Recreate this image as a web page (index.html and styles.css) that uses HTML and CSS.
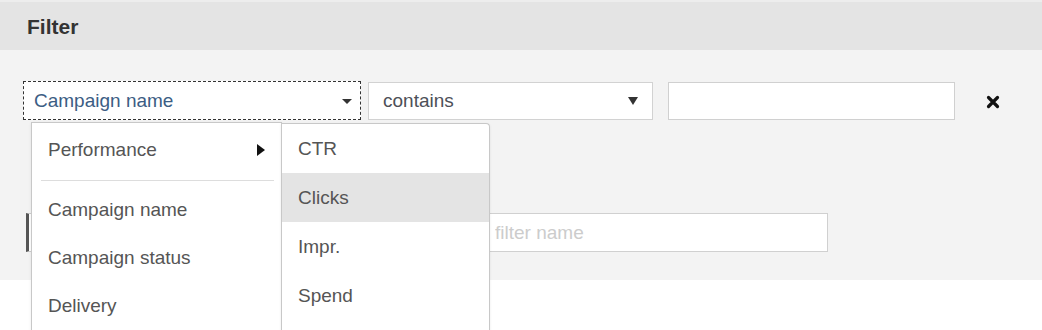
FILE: index.html
```html
<!DOCTYPE html>
<html lang="en">
<head>
  <meta charset="UTF-8" />
  <title>Filter</title>
  <link rel="stylesheet" href="styles.css">
</head>
<body>
  <div class="panel-head">Filter</div>
  <div class="panel-body">
    <div class="filter-row">
      <div class="field-wrap">
        <div class="select select-focus">
          <span class="select-value">Campaign name</span>
          <span class="caret small"></span>
        </div>

        <!-- field picker menu -->
        <div class="menu">
          <ul class="menu-list">
            <li class="menu-item has-sub">Performance <span class="sub-arrow"></span></li>
            <li class="menu-sep"></li>
            <li class="menu-item">Campaign name</li>
            <li class="menu-item">Campaign status</li>
            <li class="menu-item">Delivery</li>
          </ul>
          <ul class="menu-list submenu">
            <li class="menu-item">CTR</li>
            <li class="menu-item active">Clicks</li>
            <li class="menu-item">Impr.</li>
            <li class="menu-item">Spend</li>
          </ul>
        </div>
      </div>

      <div class="select select-op">
        <span class="select-value">contains</span>
        <span class="caret"></span>
      </div>
      <input class="text-input value-input" type="text" />
      <button class="remove" title="Remove">
        <svg width="14" height="14" viewBox="0 0 14 14"><path d="M2.5 2.5 L11.5 11.5 M11.5 2.5 L2.5 11.5" stroke="#111" stroke-width="3.2" stroke-linecap="round"/></svg>
      </button>
    </div>

    <div class="save-row">
      <button class="save-btn">Save filter</button>
      <input class="text-input name-input" type="text" placeholder="filter name" />
    </div>
  </div>
</body>
</html>
```

FILE: styles.css
```css
* {
  box-sizing: border-box;
  margin: 0;
  padding: 0;
}

body {
  font-family: 'Liberation Sans', Arial, sans-serif;
  font-size: 19px;
  color: #555;
  background: #fff;
  height: 330px;
  overflow: hidden;
}

.panel-head {
  height: 50px;
  background: #e4e4e4;
  border-top: 2px solid #ededed;
  padding: 13px 0 0 27px;
  font-weight: bold;
  font-size: 21px;
  color: #333;
}

.panel-body {
  background: #f3f3f3;
  height: 230px;
  padding: 31px 0 0 23px;
}

.filter-row {
  display: flex;
  align-items: flex-start;
}

.field-wrap {
  position: relative;
}

.select {
  display: flex;
  align-items: center;
  justify-content: space-between;
  background: #fff;
  height: 38px;
  margin-top: 1px;
}

.select-focus {
  width: 338px;
  height: 39px;
  margin-top: 0;
  border: 1px dashed #333;
  padding: 0 8px 0 10px;
}

.select-focus .select-value {
  color: #3c5d84;
}

.select-op {
  width: 285px;
  margin-left: 7px;
  border: 1px solid #d2d2d2;
  padding: 0 14px 0 14px;
}

.select-value {
  color: #4d5058;
}

.caret {
  width: 0;
  height: 0;
  border-left: 5px solid transparent;
  border-right: 5px solid transparent;
  border-top: 8px solid #333;
}

.caret.small {
  border-top-width: 5px;
  margin-top: 2px;
}

.text-input {
  height: 38px;
  border: 1px solid #d0d0d0;
  background: #fff;
  font-family: inherit;
  font-size: 19px;
  padding: 0 6px;
  outline: none;
}

.text-input::placeholder {
  color: #ccc;
}

.value-input {
  width: 287px;
  margin: 1px 0 0 15px;
}

.remove {
  border: none;
  background: none;
  margin: 14px 0 0 31px;
  width: 14px;
  height: 14px;
  display: flex;
}

.save-row {
  display: flex;
  margin-top: 93px;
  padding-left: 3px;
}

.save-btn {
  width: 455px;
  height: 39px;
  background: #fff;
  border: 1px solid #ccc;
  border-left: 3px solid #555;
  font-family: inherit;
  font-size: 19px;
  color: #555;
}

.name-input {
  width: 340px;
  height: 39px;
  margin-left: 7px;
  padding-left: 6px;
}

/* dropdown overlay */
.menu {
  position: absolute;
  top: 41px;
  left: 8px;
  display: flex;
  align-items: flex-start;
  z-index: 5;
}

.menu-list {
  list-style: none;
  background: #fff;
  border: 1px solid #c8c8c8;
  border-bottom: none;
  box-shadow: 0 1px 3px rgba(0, 0, 0, 0.08);
  width: 251px;
  height: 240px;
  padding: 1px 0 0;
}

.submenu {
  width: 209px;
  margin-left: -1px;
  margin-top: 1px;
  border-radius: 0 4px 0 0;
  padding-top: 0;
}

.menu-item {
  display: flex;
  align-items: center;
  justify-content: space-between;
  height: 48px;
  padding: 0 16px;
  color: #555;
}

.menu-list:first-child .menu-item {
  padding-left: 16px;
  padding-right: 16px;
}

.menu-list:first-child .has-sub {
  height: 52px;
}

.menu-sep {
  height: 1px;
  background: #ddd;
  margin: 4px 7px 5px 9px;
}

.submenu .menu-item {
  height: 49px;
  padding-left: 16px;
}

.submenu .menu-item.active {
  background: #e4e4e4;
}

.sub-arrow {
  width: 0;
  height: 0;
  border-top: 6px solid transparent;
  border-bottom: 6px solid transparent;
  border-left: 8px solid #111;
}
```
